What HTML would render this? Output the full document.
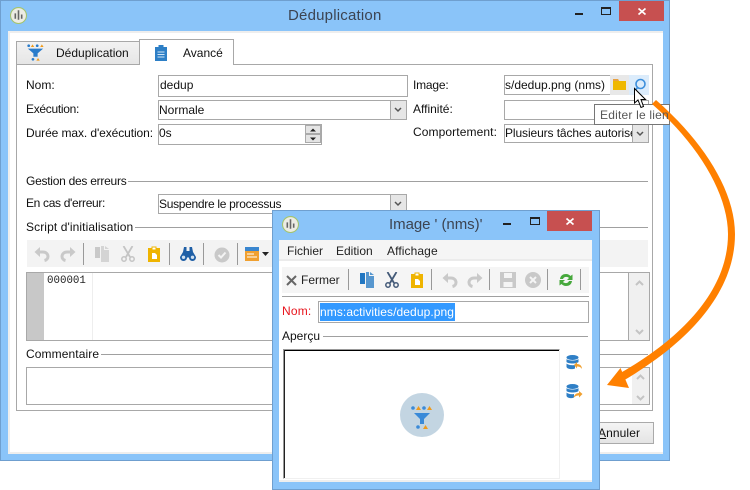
<!DOCTYPE html>
<html><head><meta charset="utf-8">
<style>
html,body{margin:0;padding:0;background:#fff;}
#r{position:relative;width:750px;height:490px;overflow:hidden;background:#fff;font:12px "Liberation Sans",sans-serif;color:#111;}
#r div{position:absolute;box-sizing:border-box;}
.t{white-space:nowrap;line-height:14px;}
.f{border:1px solid #a8a8a8;background:#fff;}
.l{height:1px;background:#a0a0a0;}
.s{width:1px;background:#999;}
svg{position:absolute;overflow:visible;}
</style></head><body><div id="r">
<svg width="0" height="0" style="position:absolute">
<defs>
<symbol id="undo" viewBox="0 0 16 16"><path d="M4 6H9C12 6 14 8 14 10.500C14 12.500 12.500 14 10.500 14.500" stroke="#c9c9c9" stroke-width="3" fill="none"/><path d="M0.500 6L6 1V11Z" fill="#c9c9c9"/></symbol>
<symbol id="redo" viewBox="0 0 16 16"><path d="M12 6H7C4 6 2 8 2 10.500C2 12.500 3.500 14 5.500 14.500" stroke="#c9c9c9" stroke-width="3" fill="none"/><path d="M15.500 6L10 1V11Z" fill="#c9c9c9"/></symbol>
<symbol id="paste" viewBox="0 0 12 16"><path d="M0 2H3.500V0.500H8.500V2H12V16H0Z" fill="#efb400"/><path d="M4.500 1.500H7.500V3.500H4.500Z" fill="#fff"/><path d="M4 7H7L9 9V13H4Z" fill="#fff"/></symbol>
<symbol id="cut" viewBox="0 0 14 16"><path d="M2.500 0L9 11M11.500 0L5 11" stroke="currentColor" stroke-width="1.800" fill="none"/><circle cx="3" cy="13" r="2.200" stroke="currentColor" stroke-width="1.500" fill="none"/><circle cx="11" cy="13" r="2.200" stroke="currentColor" stroke-width="1.500" fill="none"/></symbol>
<symbol id="copy" viewBox="0 0 15 16"><path d="M0 1H5V12H0Z" fill="currentColor"/><path d="M6 0L9 0V4H14V16H6Z" fill="currentColor" opacity=".75"/><path d="M10 0L14 3H10Z" fill="currentColor" opacity=".75"/></symbol>
<symbol id="funnel" viewBox="0 0 20 20"><circle cx="2" cy="2" r="1.600" fill="#2a7ccb"/><path d="M6.500 .5L8.500 3.500H4.500Z" fill="#f09a1a"/><circle cx="12" cy="2" r="1.600" fill="#2a7ccb"/><path d="M17.500 .5L19.500 3.500H15.500Z" fill="#f09a1a"/><path d="M1 5.500H19L12.500 11V15H7.500V11Z" fill="#2a7ccb"/><circle cx="7" cy="18" r="1.600" fill="#2a7ccb"/><path d="M13 16.500L15 19.500H11Z" fill="#f09a1a"/></symbol>
<symbol id="logo" viewBox="0 0 16 16"><circle cx="8" cy="8" r="7.500" fill="#ecece4" stroke="#a4c46c"/><path d="M5 6V11M8 3V12M11 7V11" stroke="#666" stroke-width="1.500" fill="none"/></symbol>
</defs></svg>

<!-- main window -->
<div style="left:0;top:0;width:670px;height:461px;background:#8ac4f9;border:1px solid #6f9fcf"></div>
<div style="left:8px;top:31px;width:655px;height:423px;background:#fff;border:2px solid #eee;border-width:2px 0 2px 2px"></div>
<svg style="left:10px;top:7px" width="17" height="17"><use href="#logo" width="17" height="17"/></svg>
<div class="t" style="left:288px;top:7px;font-size:15px;line-height:18px;color:#3c4452;letter-spacing:.2px">Déduplication</div>
<div style="left:575px;top:13px;width:8px;height:2px;background:#222"></div>
<div style="left:601px;top:7px;width:10px;height:8px;border:1px solid #222;border-top-width:2px"></div>
<div style="left:619px;top:1px;width:45px;height:20px;background:#c75050"></div>
<svg style="left:638px;top:8px" width="8" height="7"><path d="M0.500 0.500L7.500 6.500M7.500 0.500L0.500 6.500" stroke="#fff" stroke-width="1.700" fill="none"/></svg>

<!-- tabs -->
<div class="f" style="left:16px;top:64px;width:637px;height:347px"></div>
<div style="left:16px;top:41px;width:124px;height:24px;background:linear-gradient(#f2f2f2,#e6e6e6);border:1px solid #a8a8a8"></div>
<div style="left:139px;top:39px;width:95px;height:26px;background:#fff;border:1px solid #a8a8a8;border-bottom:0"></div>
<svg style="left:27px;top:44px" width="17" height="17"><use href="#funnel" width="17" height="17"/></svg>
<div class="t" style="left:56px;top:46px">Déduplication</div>
<svg style="left:155px;top:45px" width="12" height="16"><path d="M0 2H3.500V0H8.500V2H12V16H0Z" fill="#2d7fc6"/><path d="M2.500 7H9.500M2.500 9.500H9.500M2.500 12H9.500" stroke="#cfe4f6"/></svg>
<div class="t" style="left:183px;top:46px">Avancé</div>

<!-- form left -->
<div class="t" style="left:26px;top:78px">Nom:</div>
<div class="f" style="left:158px;top:75px;width:250px;height:22px"></div>
<div class="t" style="left:160px;top:78px">dedup</div>
<div class="t" style="left:26px;top:102px;letter-spacing:-.3px">Exécution:</div>
<div class="f" style="left:158px;top:100px;width:249px;height:20px"></div>
<div class="t" style="left:159px;top:103px">Normale</div>
<div style="left:390px;top:101px;width:16px;height:18px;background:#e6e6e6;border-left:1px solid #a8a8a8"></div>
<svg style="left:394px;top:107px" width="8" height="6"><path d="M1 1L4 4L7 1" stroke="#555" stroke-width="1.500" fill="none"/></svg>
<div class="t" style="left:26px;top:126px;letter-spacing:-.09px">Durée max. d'exécution:</div>
<div class="f" style="left:158px;top:124px;width:164px;height:21px"></div>
<div class="t" style="left:159px;top:126px">0s</div>
<div style="left:305px;top:125px;width:16px;height:9px;background:#e4e4e4;border:1px solid #aaa"></div>
<div style="left:305px;top:134px;width:16px;height:9px;background:#e4e4e4;border:1px solid #aaa"></div>
<svg style="left:309px;top:128px" width="8" height="13"><path d="M4 0.500L7 3.500H1ZM1 9.500H7L4 12.500Z" fill="#222"/></svg>

<!-- form right -->
<div class="t" style="left:413px;top:78px;letter-spacing:-.2px">Image:</div>
<div class="f" style="left:504px;top:75px;width:110px;height:20px;overflow:hidden"></div>
<div class="t" style="left:505px;top:78px;width:105px;overflow:hidden">s/dedup.png (nms)</div>
<div style="left:610px;top:75px;width:19px;height:20px;background:#e8e8e8"></div>
<div style="left:629px;top:75px;width:20px;height:20px;background:#dcecfb"></div>
<svg style="left:613px;top:79px" width="13" height="11"><path d="M0 0H5L6 2H13V11H0Z" fill="#efb800"/><path d="M0 0H5L6 2H0Z" fill="#e8a040"/></svg>
<svg style="left:633px;top:79px" width="13" height="13"><circle cx="7.500" cy="5" r="4.500" stroke="#3d8fdc" stroke-width="1.600" fill="none"/><path d="M4.500 8.500L2 12" stroke="#3d8fdc" stroke-width="1.600"/></svg>
<div class="t" style="left:413px;top:102px">Affinité:</div>
<div class="f" style="left:504px;top:100px;width:145px;height:20px"></div>
<div class="t" style="left:413px;top:125px;letter-spacing:.1px">Comportement:</div>
<div class="f" style="left:504px;top:124px;width:145px;height:19px"></div>
<div class="t" style="left:505px;top:126px;width:127px;overflow:hidden;letter-spacing:-.1px">Plusieurs tâches autorisées</div>
<div style="left:632px;top:125px;width:16px;height:17px;background:#e6e6e6;border-left:1px solid #a8a8a8"></div>
<svg style="left:636px;top:131px" width="8" height="6"><path d="M1 1L4 4L7 1" stroke="#555" stroke-width="1.500" fill="none"/></svg>

<!-- errors -->
<div class="t" style="left:26px;top:174px;letter-spacing:-.26px">Gestion des erreurs</div>
<div class="l" style="left:128px;top:181px;width:520px"></div>
<div class="t" style="left:26px;top:196px;letter-spacing:-.33px">En cas d'erreur:</div>
<div class="f" style="left:158px;top:194px;width:249px;height:20px"></div>
<div class="t" style="left:159px;top:197px;letter-spacing:-.3px">Suspendre le processus</div>
<div style="left:390px;top:195px;width:16px;height:18px;background:#e6e6e6;border-left:1px solid #a8a8a8"></div>
<svg style="left:394px;top:201px" width="8" height="6"><path d="M1 1L4 4L7 1" stroke="#555" stroke-width="1.500" fill="none"/></svg>
<div class="t" style="left:26px;top:220px;letter-spacing:.1px">Script d'initialisation</div>
<div class="l" style="left:135px;top:227px;width:513px"></div>

<!-- toolbar 1 -->
<div style="left:27px;top:240px;width:621px;height:27px;background:#f3f3f3"></div>
<svg style="left:34px;top:246px" width="16" height="16"><use href="#undo" width="16" height="16"/></svg>
<svg style="left:60px;top:246px" width="16" height="16"><use href="#redo" width="16" height="16"/></svg>
<div class="s" style="left:83px;top:243px;height:22px"></div>
<svg style="left:95px;top:246px;color:#c9c9c9" width="15" height="16"><use href="#copy" width="15" height="16"/></svg>
<svg style="left:121px;top:246px;color:#c4c4c4" width="14" height="16"><use href="#cut" width="14" height="16"/></svg>
<svg style="left:148px;top:246px" width="12" height="16"><use href="#paste" width="12" height="16"/></svg>
<div class="s" style="left:169px;top:243px;height:22px"></div>
<svg style="left:180px;top:247px" width="16" height="14"><path d="M4 0H6.500V4H9.500V0H12L13 5L16 10C16 12.500 14.500 14 12.500 14C10.500 14 9 12.500 9 10.500H7C7 12.500 5.500 14 3.500 14C1.500 14 0 12.500 0 10L3 5Z" fill="#1f5fa6"/><circle cx="3.500" cy="10.300" r="1.700" fill="#cfe0f0"/><circle cx="12.500" cy="10.300" r="1.700" fill="#cfe0f0"/></svg>
<div class="s" style="left:203px;top:243px;height:22px"></div>
<svg style="left:214px;top:247px" width="16" height="16"><circle cx="8" cy="8" r="7.500" fill="#c9c9c9"/><path d="M4.500 8L7 10.500L11.500 5.500" stroke="#f3f3f3" stroke-width="2" fill="none"/></svg>
<div class="s" style="left:237px;top:243px;height:22px"></div>
<svg style="left:245px;top:247px" width="14" height="14"><rect width="14" height="14" fill="#f0a030"/><rect width="14" height="4" fill="#3a86cf"/><path d="M2 7H9M2 10H12" stroke="#fff"/></svg>
<svg style="left:262px;top:252px" width="7" height="4"><path d="M0 0H7L3.500 4Z" fill="#222"/></svg>

<!-- editor -->
<div class="f" style="left:26px;top:272px;width:624px;height:69px"></div>
<div style="left:27px;top:273px;width:17px;height:67px;background:#c8c8c8"></div>
<div style="left:92px;top:273px;width:1px;height:67px;background:#eee"></div>
<div class="t" style="left:47px;top:274px;font:10.800px/14px 'Liberation Mono',monospace;color:#222">000001</div>
<div style="left:628px;top:273px;width:21px;height:67px;background:#f0f0f0;border-left:1px solid #a8a8a8"></div>
<svg style="left:635px;top:280px" width="9" height="55"><path d="M1 5L4.500 1.500L8 5M1 50L4.500 53.500L8 50" stroke="#c4c4c4" stroke-width="2" fill="none"/></svg>

<!-- comment -->
<div class="t" style="left:26px;top:347px;letter-spacing:.1px">Commentaire</div>
<div class="l" style="left:101px;top:354px;width:547px"></div>
<div class="f" style="left:26px;top:367px;width:624px;height:38px"></div>
<div style="left:632px;top:368px;width:17px;height:36px;background:#f0f0f0"></div>
<svg style="left:636px;top:374px" width="9" height="27"><path d="M1 5L4.500 1.500L8 5M1 22L4.500 25.500L8 22" stroke="#c4c4c4" stroke-width="2" fill="none"/></svg>

<!-- annuler -->
<div style="left:590px;top:422px;width:64px;height:22px;background:linear-gradient(#f4f4f4,#e4e4e4);border:1px solid #aaa"></div>
<div class="t" style="left:598px;top:426px;letter-spacing:.1px"><u>A</u>nnuler</div>

<!-- tooltip -->
<div style="left:594px;top:104px;width:76px;height:21px;background:#fff;border:1px solid #767676"></div>

<!-- second window -->
<div style="left:272px;top:210px;width:328px;height:280px;background:#8ac4f9;border:1px solid #6f9fcf"></div>
<div style="left:279px;top:240px;width:313px;height:242px;background:#fff;border:2px solid #eee;border-width:0 0 2px 0"></div>
<svg style="left:282px;top:216px" width="17" height="17"><use href="#logo" width="17" height="17"/></svg>
<div class="t" style="left:389px;top:216px;font-size:15px;line-height:18px;color:#3c4452;letter-spacing:-.05px">Image ' (nms)'</div>
<div style="left:503px;top:223px;width:8px;height:2px;background:#222"></div>
<div style="left:530px;top:217px;width:10px;height:8px;border:1px solid #222;border-top-width:2px"></div>
<div style="left:547px;top:211px;width:45px;height:20px;background:#c75050"></div>
<svg style="left:566px;top:218px" width="8" height="7"><path d="M0.500 0.500L7.500 6.500M7.500 0.500L0.500 6.500" stroke="#fff" stroke-width="1.700" fill="none"/></svg>

<div style="left:279px;top:240px;width:313px;height:19px;background:#f5f5f5"></div>
<div style="left:279px;top:259px;width:313px;height:2px;background:#ebebeb"></div>
<div class="t" style="left:287px;top:244px;color:#222">Fichier</div>
<div class="t" style="left:336px;top:244px;color:#222">Edition</div>
<div class="t" style="left:387px;top:244px;color:#222;letter-spacing:.1px">Affichage</div>

<div style="left:282px;top:267px;width:307px;height:26px;background:#f5f5f5"></div>
<svg style="left:286px;top:275px" width="11" height="11"><path d="M1 1L10 10M10 1L1 10" stroke="#666" stroke-width="2" fill="none"/></svg>
<div class="t" style="left:301px;top:273px;color:#222">Fermer</div>
<div class="s" style="left:348px;top:269px;height:21px"></div>
<svg style="left:360px;top:272px;color:#2277c2" width="15" height="16"><use href="#copy" width="15" height="16"/></svg>
<svg style="left:385px;top:272px;color:#445a78" width="14" height="16"><use href="#cut" width="14" height="16"/></svg>
<svg style="left:411px;top:272px" width="12" height="16"><use href="#paste" width="12" height="16"/></svg>
<div class="s" style="left:431px;top:269px;height:21px"></div>
<svg style="left:442px;top:272px" width="16" height="16"><use href="#undo" width="16" height="16"/></svg>
<svg style="left:467px;top:272px" width="16" height="16"><use href="#redo" width="16" height="16"/></svg>
<div class="s" style="left:489px;top:269px;height:21px"></div>
<svg style="left:500px;top:272px" width="16" height="16"><path d="M0 0H16V16H0Z" fill="#c9c9c9"/><path d="M4 1H12V6H4ZM3.500 10H12.500V15H3.500Z" fill="#f5f5f5"/></svg>
<svg style="left:525px;top:272px" width="16" height="16"><circle cx="8" cy="8" r="8" fill="#c9c9c9"/><path d="M5 5L11 11M11 5L5 11" stroke="#f5f5f5" stroke-width="2"/></svg>
<div class="s" style="left:547px;top:269px;height:21px"></div>
<svg style="left:558px;top:272px" width="16" height="16"><path d="M2 7C2.500 3.500 5 2 8 2C10 2 11.500 3 12.500 4L14.500 2.500V8H9L11 6C9.500 4.500 6 4.300 5 7ZM14 9C13.500 12.500 11 14 8 14C6 14 4.500 13 3.500 12L1.500 13.500V8H7L5 10C6.500 11.500 10 11.700 11 9Z" fill="#46a83c"/></svg>
<div class="s" style="left:580px;top:269px;height:21px"></div>
<div class="l" style="left:282px;top:296px;width:307px"></div>

<div class="t" style="left:282px;top:304px;color:#e8141c;letter-spacing:.2px">Nom:</div>
<div class="f" style="left:318px;top:301px;width:271px;height:22px"></div>
<div style="left:320px;top:303px;width:135px;height:18px;background:#3399ff"></div>
<div class="t" style="left:320px;top:305px;color:#fff;letter-spacing:.08px">nms:activities/dedup.png</div>

<div class="t" style="left:282px;top:329px">Aperçu</div>
<div class="l" style="left:323px;top:336px;width:265px"></div>

<div style="left:283px;top:349px;width:277px;height:130px;background:#fff;border:1px solid #f0f0f0;border-top-color:#999;border-left-color:#999"></div>
<div style="left:284px;top:350px;width:275px;height:1px;background:#000"></div>
<div style="left:284px;top:350px;width:1px;height:128px;background:#222"></div>
<div style="left:400px;top:393px;width:44px;height:44px;border-radius:50%;background:#c3d5e2"></div>
<svg style="left:411px;top:406px" width="21" height="23"><circle cx="2" cy="2" r="1.800" fill="#3a8ad8"/><path d="M7.500 0L10 4H5Z" fill="#ee9a1c"/><circle cx="13" cy="2" r="1.800" fill="#3a8ad8"/><path d="M18.500 0L21 4H16Z" fill="#ee9a1c"/><path d="M3 7H19L13 13V18H9V13Z" fill="#3a8ad8"/><circle cx="7" cy="21" r="1.800" fill="#3a8ad8"/><path d="M14.500 19L17 23H12Z" fill="#ee9a1c"/></svg>

<svg style="left:566px;top:355px" width="17" height="16"><ellipse cx="6.500" cy="2.500" rx="6" ry="2.500" fill="#2f7fc6"/><path d="M0.500 4V7C2 9 11 9 12.500 7V4C11 6 2 6 0.500 4ZM0.500 8.500V12C1.500 14.500 7 14.500 9 13.500V10C6 10.500 2 10 0.500 8.500Z" fill="#2f7fc6"/><path d="M8 10L11 7V9C14 9 16 11 16 14C15 12 13 11.500 11 11.500V13.500Z" fill="#f0a030"/></svg>
<svg style="left:566px;top:384px" width="17" height="15"><ellipse cx="6.500" cy="2.500" rx="6" ry="2.500" fill="#2f7fc6"/><path d="M0.500 4V7C2 9 11 9 12.500 7V4C11 6 2 6 0.500 4ZM0.500 8.500V12C1.500 14.500 6 14.500 8 13.500V10C6 10.500 2 10 0.500 8.500Z" fill="#2f7fc6"/><path d="M16.500 10L13 7V9C10 9 8 11 7.500 14C9 12 11 11.500 13 11.500V13.500Z" fill="#f0a030"/></svg>

<!-- arrow -->
<svg style="left:0;top:0" width="750" height="490"><path d="M656 100 C 702 140, 735 190, 735 234 C 735 298, 680 348, 621 382 L 617 375 C 676 342, 728 294, 728 234 C 728 194, 698 144, 652 104 Z" fill="#ff8000"/><path d="M607 385 L620.500 368 L629 388Z" fill="#ff8000"/></svg>

<div class="t" style="left:600px;top:108px;color:#575757;letter-spacing:.2px">Editer le lien</div>
<!-- cursor -->
<svg style="left:634px;top:88px" width="12" height="21"><path d="M0.500 0.500V15L4 12L7 19.500L9.500 18.500L7 11.500H11.500Z" fill="#fff" stroke="#000"/></svg>
</div></body></html>
